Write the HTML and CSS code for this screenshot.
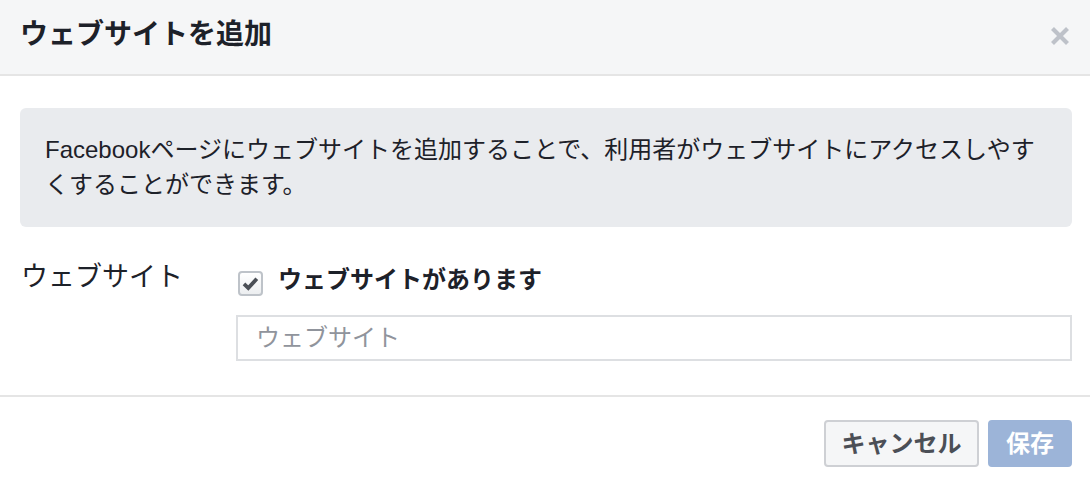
FILE: index.html
```html
<!DOCTYPE html>
<html lang="ja">
<head>
<meta charset="utf-8">
<title>ウェブサイトを追加</title>
<link rel="stylesheet" href="styles.css">
</head>
<body>
<div class="dialog">
  <div class="header">
    <h1 class="title">ウェブサイトを追加</h1>
    <button class="close" aria-label="閉じる">
      <svg width="20" height="20" viewBox="0 0 20 20"><path d="M2.5 2.5 L17.5 17.5 M17.5 2.5 L2.5 17.5" stroke="#bec2c9" stroke-width="4.2" stroke-linecap="butt"/></svg>
    </button>
  </div>
  <div class="content">
    <div class="info">Facebookページにウェブサイトを追加することで、利用者がウェブサイトにアクセスしやすくすることができます。</div>
    <div class="row">
      <div class="label">ウェブサイト</div>
      <div class="field">
        <label class="check-row">
          <span class="checkbox">
            <svg width="21" height="21" viewBox="0 0 21 21"><path d="M4 10.8 L8.3 15 L16.8 5.8" fill="none" stroke="#4b4f56" stroke-width="3.8"/></svg>
          </span>
          <span class="check-label">ウェブサイトがあります</span>
        </label>
        <div class="input">ウェブサイト</div>
      </div>
    </div>
  </div>
  <div class="footer">
    <button class="btn cancel">キャンセル</button>
    <button class="btn save">保存</button>
  </div>
</div>
</body>
</html>
```
FILE: styles.css
```css
html, body {
  margin: 0;
  padding: 0;
  background: #fff;
}
body {
  font-family: "Liberation Sans", "Noto Sans CJK JP", sans-serif;
  color: #1d2129;
}
.dialog {
  width: 1090px;
  height: 488px;
  overflow: hidden;
}
.header {
  height: 74px;
  background: #f5f6f7;
  border-bottom: 2px solid #e5e5e5;
  display: flex;
  align-items: center;
  justify-content: space-between;
  padding: 0 20px 0 20px;
  box-sizing: content-box;
}
.title {
  margin: 0 0 4px 0;
  font-size: 28px;
  font-weight: bold;
  line-height: 36px;
  color: #1d2129;
}
.close {
  border: 0;
  background: none;
  padding: 0;
  width: 20px;
  height: 20px;
  margin-bottom: 2px;
  display: flex;
}
.content {
  padding: 32px 18px 34px 20px;
}
.info {
  background: #e9ebee;
  border-radius: 6px;
  padding: 24px 25px 25px 25px;
  font-size: 24px;
  line-height: 35px;
  color: #1d2129;
}
.row {
  display: flex;
  margin-top: 35px;
}
.label {
  width: 216px;
  font-size: 27px;
  line-height: 30px;
  margin-top: 0;
  padding-left: 1px;
  box-sizing: border-box;
}
.field {
  flex: 1;
  display: flex;
  flex-direction: column;
}
.check-row {
  display: flex;
  align-items: center;
  height: 36px;
  gap: 15px;
}
.checkbox {
  width: 21px;
  height: 21px;
  border: 2px solid #bec3c9;
  border-radius: 4px;
  background: linear-gradient(#ffffff, #eceef0);
  display: flex;
  margin-top: 7px;
  margin-left: 2px;
}
.check-label {
  font-size: 24px;
  font-weight: bold;
  line-height: 36px;
}
.input {
  margin-top: 17px;
  height: 46px;
  border: 2px solid #dddfe2;
  box-sizing: border-box;
  padding: 0 18px;
  font-size: 24px;
  line-height: 42px;
  color: #90949c;
}
.footer {
  border-top: 2px solid #e5e5e5;
  display: flex;
  justify-content: flex-end;
  gap: 9px;
  padding: 23px 18px 21px 0;
}
.btn {
  font-family: "Liberation Sans", "Noto Sans CJK JP", sans-serif;
  font-size: 24px;
  font-weight: bold;
  height: 47px;
  line-height: 43px;
  border-radius: 4px;
  border: 2px solid;
  padding: 0 15px;
  margin: 0;
}
.cancel {
  background: #f5f6f7;
  border-color: #ced0d4;
  color: #4b4f56;
  width: 155px;
}
.save {
  background: #9cb4d8;
  border-color: #9cb4d8;
  color: #fff;
  width: 84px;
}
```
